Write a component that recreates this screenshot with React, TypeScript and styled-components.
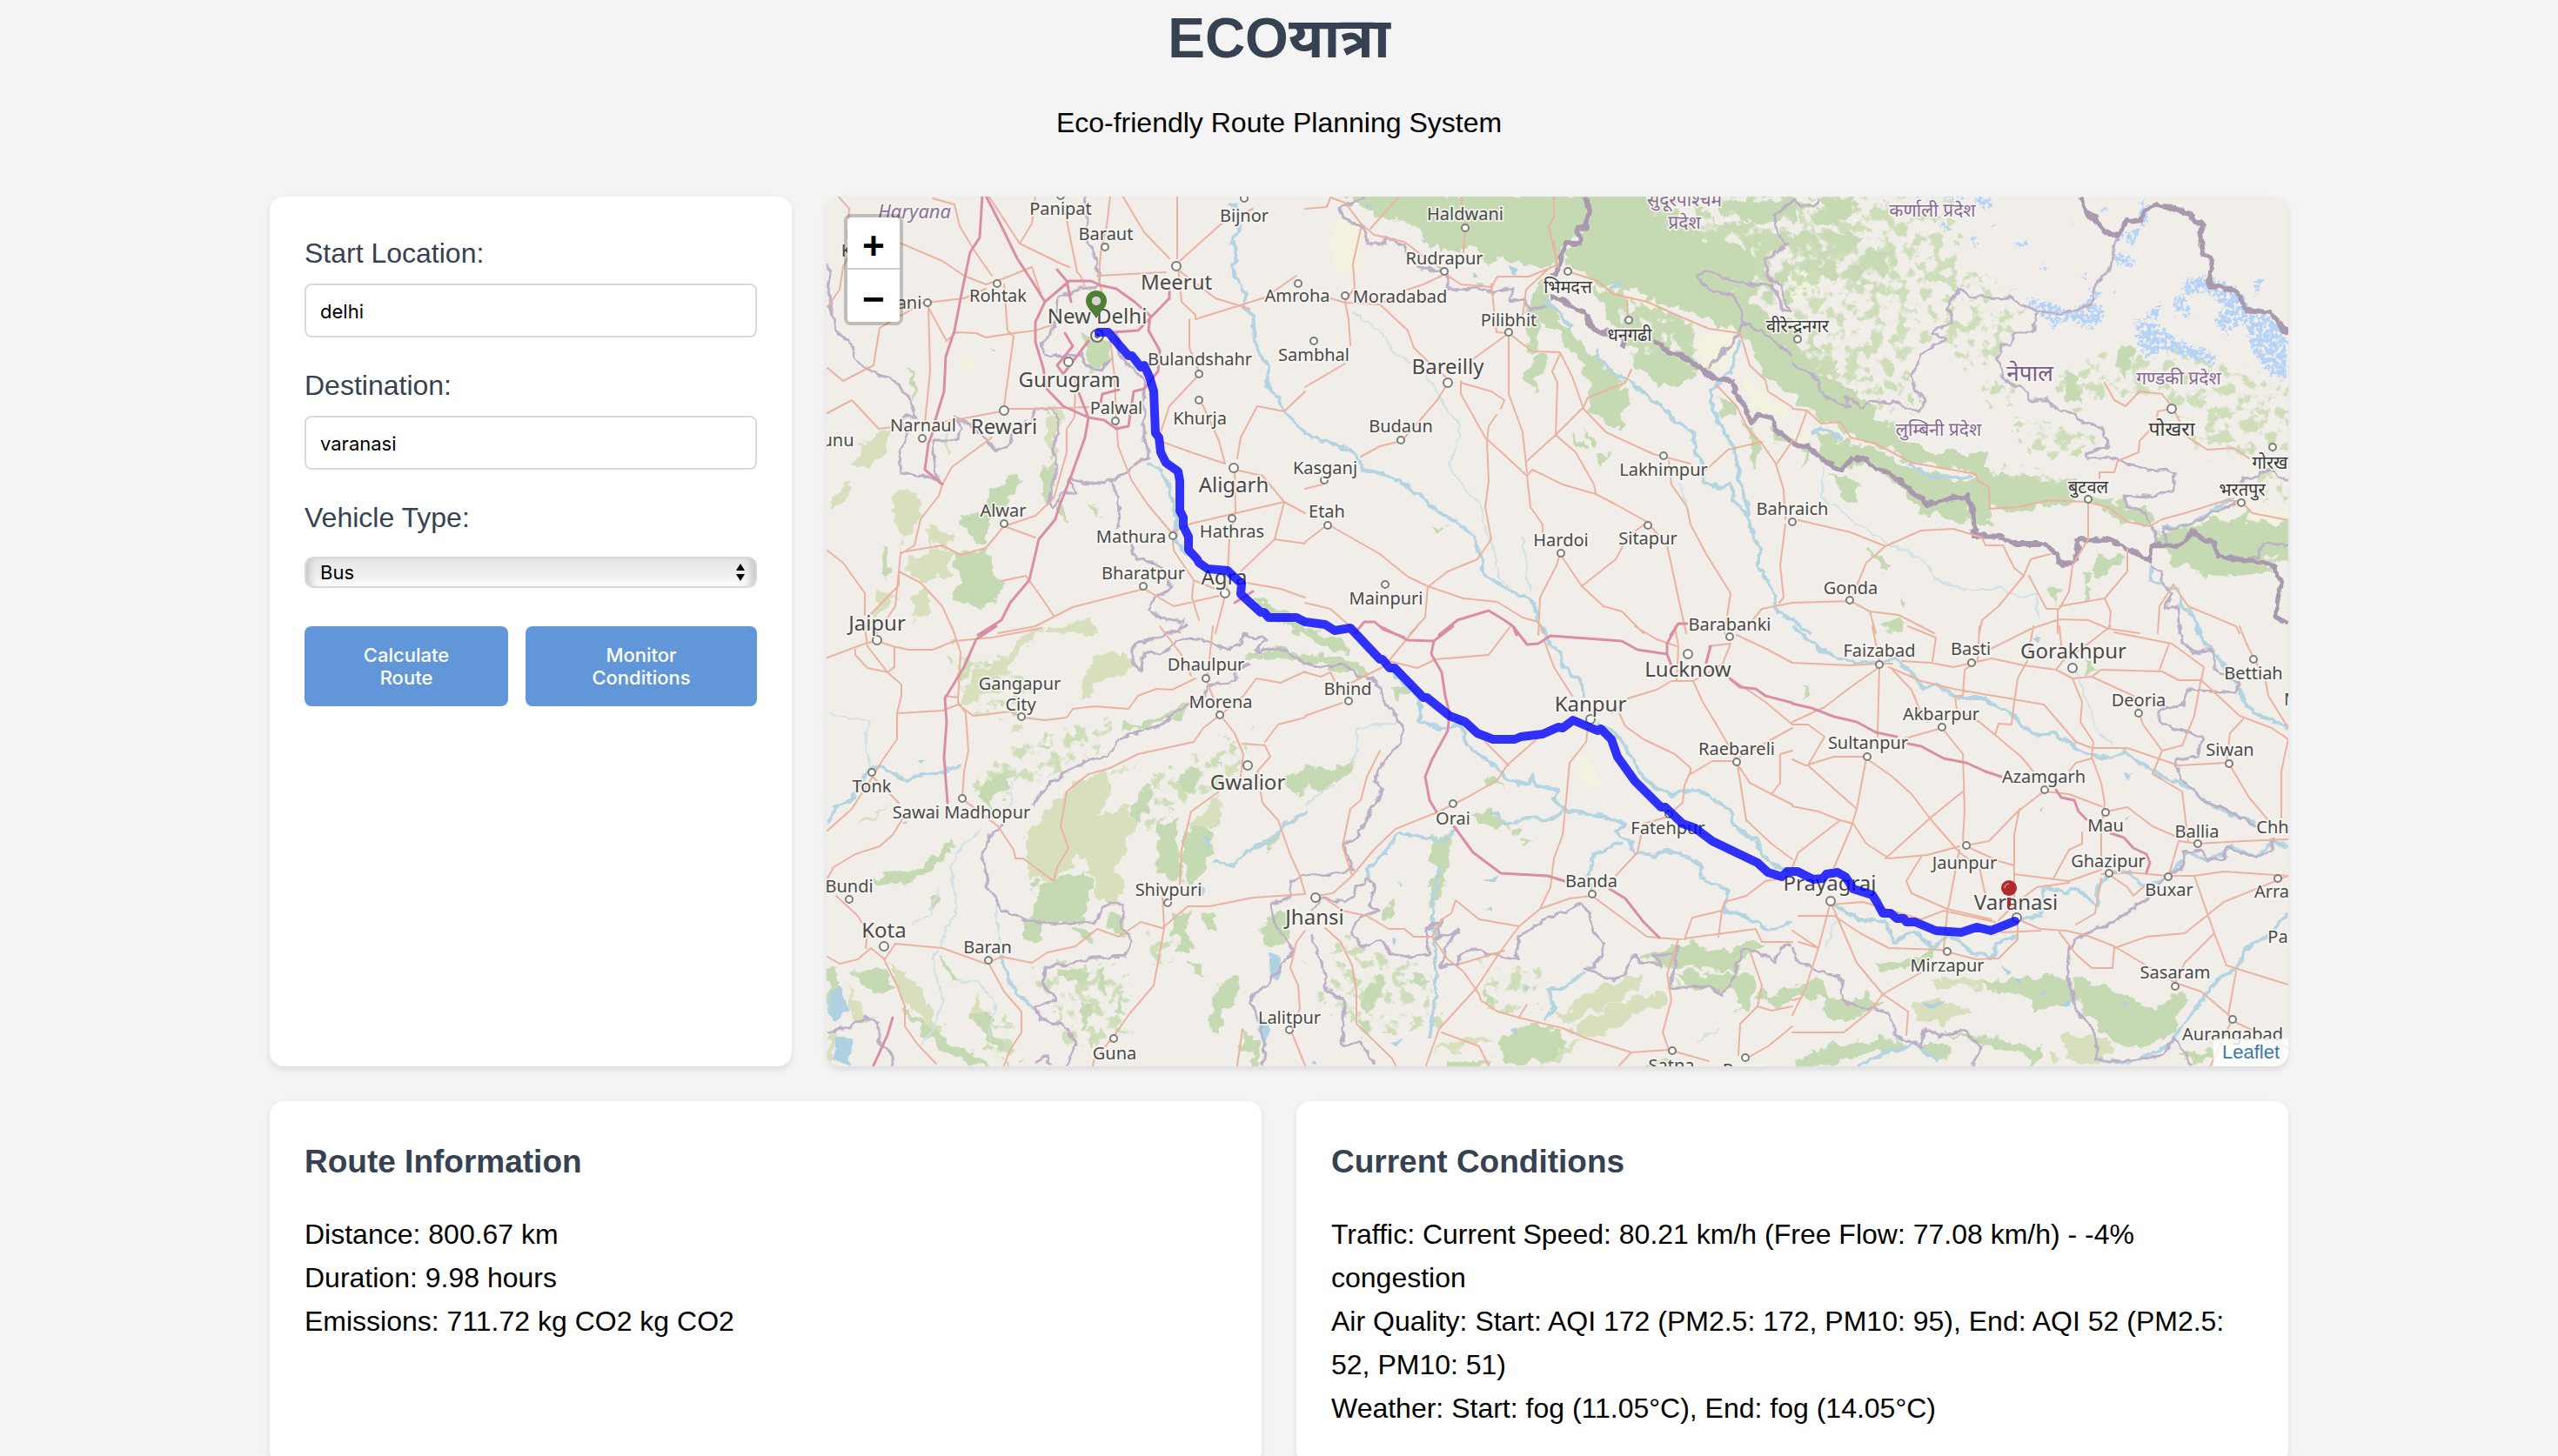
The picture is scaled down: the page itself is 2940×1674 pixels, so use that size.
import React from "react";
import styled, { createGlobalStyle } from "styled-components";

const GlobalStyle = createGlobalStyle`
  * { box-sizing: border-box; }
  body { margin: 0; background: #f4f4f4; }
`;

const sans = `"Liberation Sans", Arial, "Noto Sans", sans-serif`;
const ui = `Inter, "Liberation Sans", sans-serif`;
const ink = "#364152";

const Page = styled.div`
  height: 100vh;
  overflow-y: auto;
  scrollbar-width: none;
  background: #f4f4f4;
  color: #000;
  font-family: ${sans};
  font-size: 32px;
  line-height: 50px;
`;

const Container = styled.div`
  max-width: 2400px;
  margin: 0 auto;
  padding: 0 40px 40px;
`;

const Header = styled.header`
  display: flex;
  flex-direction: column;
  align-items: center;
  gap: 28px;
  margin-bottom: 60px;
`;

const Title = styled.h1`
  margin: 0;
  color: ${ink};
  font-size: 64px;
  line-height: 88px;
  font-weight: 700;
`;

const Subtitle = styled.p`
  margin: 0;
`;

const Planner = styled.main`
  display: grid;
  grid-template-columns: 600px minmax(0, 1fr);
  gap: 40px;
  margin-bottom: 40px;
`;

const Card = styled.section`
  padding: 40px;
  background: #fff;
  border-radius: 16px;
  box-shadow: 0 4px 8px rgba(0, 0, 0, 0.1);
`;

const Form = styled.form`
  display: flex;
  flex-direction: column;
  gap: 30px;
`;

const Field = styled.div<{ $gap?: number }>`
  display: flex;
  flex-direction: column;
  gap: ${(p) => p.$gap ?? 10}px;
`;

const Label = styled.label`
  color: ${ink};
`;

const TextInput = styled.input`
  width: 100%;
  height: 62px;
  padding: 2px 16px 0;
  border: 2px solid #dadada;
  border-radius: 8px;
  background: #fff;
  color: #000;
  font: 400 22px ${ui};
`;

const SelectWrap = styled.div`
  position: relative;
  display: flex;
  margin-bottom: 14px;
`;

const Select = styled.select`
  appearance: none;
  width: 100%;
  height: 36px;
  padding: 0 16px;
  border: 2px solid #d8d8d8;
  border-radius: 10px;
  background: linear-gradient(#e6e6e6, #efefef 60%, #fff);
  box-shadow: inset 10px 0 8px -6px #c4c4c4, inset -10px 0 8px -6px #c4c4c4;
  color: #000;
  font: 400 22px ${ui};
`;

const SelectArrows = styled.svg`
  position: absolute;
  right: 14px;
  top: 8px;
  width: 10px;
  height: 20px;
  pointer-events: none;
`;

const Actions = styled.div`
  display: grid;
  grid-template-columns: 234fr 266fr;
  gap: 20px;
`;

const Button = styled.button`
  padding: 20px 40px;
  border: 0;
  border-radius: 8px;
  background: #6197d9;
  color: #fff;
  font: 500 22px/26px ${ui};
`;

const MapCard = styled.section`
  position: relative;
  height: 1000px;
  overflow: hidden;
  border-radius: 16px;
  background: #f1eee9;
  box-shadow: 0 4px 8px rgba(0, 0, 0, 0.1);
`;

const MapSvg = styled.svg`
  display: block;
  width: 100%;
  height: 100%;
`;

const ZoomControl = styled.div`
  position: absolute;
  left: 20px;
  top: 20px;
  display: flex;
  flex-direction: column;
  border: 4px solid rgba(0, 0, 0, 0.2);
  border-radius: 8px;
  background: #fff;
  background-clip: padding-box;
`;

const ZoomButton = styled.button`
  width: 60px;
  height: 60px;
  padding: 14px 0 0;
  border: 0;
  background: transparent;
  color: #000;
  font: 700 44px/44px "Liberation Mono", monospace;

  &:first-child {
    border-bottom: 2px solid #ccc;
  }
`;

const Attribution = styled.div`
  position: absolute;
  right: 0;
  bottom: 0;
  padding: 0 10px;
  background: rgba(255, 255, 255, 0.8);
  font-size: 22px;
  line-height: 32px;
`;

const AttributionLink = styled.a`
  color: #3b78ab;
  text-decoration: none;
`;

const InfoGrid = styled.div`
  display: grid;
  grid-template-columns: repeat(2, minmax(0, 1fr));
  gap: 40px;
`;

const InfoTitle = styled.h3`
  margin: 0 0 28px;
  color: ${ink};
  font-size: 37px;
  line-height: 60px;
`;

/* ---- map data: every layer is stored per survey sheet ---- */

type Sheet = "A" | "B" | "C" | "D" | "E" | "F";
type Layer = Partial<Record<Sheet, string[]>>;

const sheets: Record<Sheet, { x: number; y: number; k: number }> = {
  A: { x: -10, y: -6, k: 2.8 },
  B: { x: 550, y: -6, k: 2.8 },
  C: { x: 1110, y: -6, k: 2.7034 },
  D: { x: -10, y: 494, k: 2.8 },
  E: { x: 550, y: 494, k: 2.8 },
  F: { x: 1110, y: 494, k: 2.7034 },
};

const at = (s: Sheet, x: number, y: number) => {
  const o = sheets[s];
  return [Math.round(x / o.k + o.x), Math.round(y / 3 + o.y)];
};

const trace = (s: Sheet, pts: string) =>
  "M" +
  pts
    .split(" ")
    .map((p) => {
      const [x, y] = p.split(",").map(Number);
      return at(s, x, y).join(" ");
    })
    .join("L");

const merge = (layer: Layer, close = false) =>
  (Object.keys(layer) as Sheet[])
    .flatMap((s) => layer[s]!.map((l) => trace(s, l) + (close ? "Z" : "")))
    .join("");

const forest: Layer = {
  A: [
    "465,1110 520,1120 560,1040 640,980 655,1000 590,1080 545,1160 540,1210 490,1190",
    "440,1240 540,1250 560,1330 600,1370 520,1440 440,1400 460,1320",
    "725,950 752,950 752,1070 730,1060",
    "770,1060 795,1130 780,1110", "880,1075 910,1090 905,1115",
    "860,500 930,520 935,600 880,610 860,560",
    "205,1230 225,1260 225,1330 205,1310",
    "1400,1410 1480,1440 1568,1500 1568,1525 1470,1480",
    "300,610 315,680 305,720",
  ],
  B: [
    "140,15 480,15 800,15 895,15 900,120 835,180 810,250 740,250 600,235 520,190 430,200 360,120 250,80",
    "905,15 1120,15 1100,90 1300,170 1430,200 1450,300 1380,340 1280,300 1480,420 1560,560 1568,700 1480,640 1420,500 1280,430 1150,380 1050,330 950,320 850,260 840,210 905,140",
    "1340,60 1568,30 1568,90 1480,100",
    "770,290 780,380 830,470 900,530 960,600 1040,690 1040,740 980,800 920,760 910,640 870,560 800,480 750,440 745,540 725,540 715,420",
    "750,560 775,580 740,680 715,620", "940,340 1000,380 1035,470 1000,470 950,400", "1060,380 1090,480 1070,500",
    "1130,400 1180,500 1170,530", "1180,430 1240,480 1240,580 1200,540", "1050,560 1200,570 1260,620 1200,670 1110,650",
    "1340,720 1380,730 1375,780 1340,775", "1420,800 1470,880 1445,940", "1500,810 1560,860 1520,850",
    "870,840 890,880 880,885", "905,820 935,870 925,880", "410,1160 445,1165 430,1175", "990,770 1030,800 1010,820", "950,910 975,915 955,940",
  ],
  C: [
    "0,540 80,620 200,700 260,780 350,860 450,900 600,905 610,970 800,1010 900,1010 870,1070 740,1090 620,1090 560,970 380,930 260,870 160,840 60,740 0,700",
    "80,820 150,870 260,890 370,960 500,990 600,1000 610,1140 570,1150 540,1060 430,1080 360,1030 270,960 190,920 160,960 100,920",
    "340,1010 430,1075 545,1060 550,1130 460,1120 400,1110", "120,980 205,1020 200,1080 160,1050", "20,880 45,890 40,930",
    "930,1050 1100,1100 1110,1150 1020,1140", "1140,1180 1300,1150 1541,1150 1541,1220 1450,1260 1490,1310 1300,1330 1180,1270 1140,1240",
    "1020,540 1060,550 1040,630 1010,600", "950,1250 1020,1270 960,1330 930,1290", "900,1310 930,1320 900,1350", "905,1360 930,1370 915,1410",
    "285,1490 350,1480 350,1510 310,1525", "810,1370 835,1380 810,1420", "240,1240 300,1290 290,1310", "340,1410 350,1415 345,1430",
    "100,30 180,20 160,100 110,90", "850,630 890,650 880,730 850,700", "1410,1090 1410,1140 1370,1145",
  ],
  D: [
    "700,890 780,870 860,850 880,900 850,1010 760,1030 680,1010 720,950",
    "1100,680 1160,670 1165,880 1110,860 1090,800", "1200,690 1270,700 1260,770 1220,860 1190,900 1180,780",
    "1170,500 1230,480 1220,580 1180,580", "1010,620 1060,560 1060,640 1020,670",
    "520,580 580,510 605,530 560,620", "170,880 330,830 430,750 410,790 320,870 190,900",
    "500,1340 540,1350 600,1460 570,1450", "650,1020 720,1020 710,1080 680,1080", "400,1150 450,1225 430,1220",
    "1140,980 1190,990 1180,1060 1220,1110 1160,1120", "1240,990 1270,990 1270,1040 1245,1030", "1200,1150 1240,1200 1210,1190",
    "1440,1040 1500,980 1510,1090 1440,1095", "1380,110 1470,70 1568,110 1568,125 1470,95 1400,120", "980,350 1100,320 1190,270 1180,300 1090,340",
    "120,1190 200,1180 240,1250 190,1260", "280,1330 420,1430 500,1480 560,1515 480,1505 380,1450", "1290,1230 1340,1210 1340,1290 1300,1330 1290,1400 1260,1370",
    "1370,1400 1410,1440 1410,1515 1380,1460", "930,1010 980,1010 980,1060 940,1040", "820,1040 880,1050 870,1090", "30,1190 60,1200 50,1290 30,1290",
    "780,1190 870,1200 840,1240", "900,1170 930,1230 920,1270", "970,1290 990,1330 970,1330", "850,1300 880,1310 860,1390", "1500,520 1568,500 1568,560 1510,555", "725,410 750,415 740,430",
    "1440,740 1480,735 1450,770", "370,930 380,940 360,980",
  ],
  E: [
    "0,490 60,500 160,470 140,500 70,560 20,570 0,540", "0,90 60,110 160,130 210,180 120,140 0,130", "0,20 60,20 150,90 90,80",
    "540,640 600,635 640,700 560,680", "590,515 640,540 600,540", "410,730 460,720 460,820 430,930 410,970 420,850",
    "670,690 705,695 680,715", "1100,1140 1260,1090 1300,1130 1470,1090 1380,1180 1250,1180 1160,1180",
    "1200,1210 1430,1190 1450,1230 1410,1330 1380,1260 1260,1240", "1470,1280 1568,1245 1568,1290 1500,1305",
    "630,1430 750,1370 820,1400 820,1470 720,1515 640,1490", "185,1320 205,1230 255,1210 225,1300 195,1330", "340,1215 400,1220 370,1240", "180,1360 200,1385 180,1385",
    "520,1490 600,1500 590,1515 450,1515", "690,740 705,755 695,755", "575,1250 590,1290 580,1290", "280,210 350,220 300,240", "300,940 270,1010 250,1000",
    "1090,1515 1160,1490 1160,1515",
  ],
  F: [
    "590,1240 740,1210 850,1215 870,1290 760,1330 720,1270 640,1260", "870,1215 960,1240 1080,1310 1160,1310 1200,1260 1220,1280 1180,1400 1100,1450 980,1420 920,1340 880,1280",
    "270,1165 340,1160 440,1115 410,1160 280,1185", "0,1240 90,1220 110,1300 180,1300 230,1270 280,1290 230,1330 120,1350 90,1280 0,1270",
    "10,1490 150,1440 320,1420 350,1450 200,1480 90,1515 10,1515", "400,1450 470,1440 480,1490 420,1480", "480,1410 620,1420 700,1440 770,1460 740,1515 720,1470 600,1440",
    "285,0 350,0 320,25", "910,120 930,150 915,165", "1220,1470 1300,1480 1260,1515", "35,215 45,230 38,240",
  ],
};

const scrub: Layer = {
  A: [
    "130,880 240,820 220,900 160,950 120,940", "240,1050 320,1030 330,1130 270,1220 240,1100", "40,1060 110,1000 90,1060 40,1100",
    "340,1160 430,1180 420,1230 360,1220", "280,1260 430,1230 430,1330 300,1340", "180,1390 260,1380 230,1440 190,1460",
    "300,1390 360,1370 350,1460 310,1480", "735,760 780,760 760,900 735,940", "400,880 440,830 410,900", "740,1500 860,1470 900,1520 740,1525",
  ],
  D: [
    "460,270 500,150 560,140 700,10 740,0 600,150 510,260", "840,200 900,100 990,80 1030,140 930,190 850,240", "950,510 1050,455 980,490 950,500",
    "660,730 780,590 820,550 930,490 950,560 910,650 1000,620 1020,680 970,830 980,950 940,960 900,930 860,780 800,830 760,880 680,870",
    "1200,680 1290,580 1305,660 1270,680 1210,700", "1310,480 1350,480 1350,510 1310,515",
    "220,1150 300,1220 400,1380 390,1415 330,1350 260,1260", "100,1240 150,1340 200,1350 120,1370", "30,1400 55,1420 50,1515 30,1490", "500,1270 525,1290 520,1380 500,1350",
    "480,230 510,190 520,210", "620,355 665,340 650,370", "120,680 240,620 150,680",
  ],
  E: [
    "800,1350 920,1260 1080,1195 1090,1240 960,1310 830,1370", "850,1390 1000,1290 1150,1260 1160,1290 1010,1380 920,1420", "720,1515 740,1470 900,1430 820,1490",
    "1180,1220 1240,1240 1180,1250", "410,1470 520,1420 600,1420 500,1460", "0,1140 15,1150 10,1180",
  ],
  F: [
    "370,1300 400,1290 500,1300 560,1330 480,1340 480,1390 400,1350 380,1350", "430,1210 600,1225 580,1255 450,1240", "840,1420 930,1400 1000,1450 940,1515 850,1480", "800,1475 840,1480 820,1510",
  ],
};

const meadow: Layer = {
  A: ["480,580 510,600 490,625", "975,190 995,195 980,210"],
  B: [
    "90,110 180,90 180,280 110,290 75,210", "850,400 950,470 950,490 870,460", "1260,480 1400,490 1350,620 1280,600", "1400,640 1560,760 1540,780 1430,740", "1060,330 1150,400 1100,420",
  ],
  C: ["250,790 400,860 490,890 350,880 240,830", "0,270 60,300 30,390 0,380", "1430,1090 1541,1110 1541,1140 1430,1130", "0,820 60,850 50,880 0,860", "1200,1150 1350,1100 1360,1140"],
  D: ["520,520 570,490 540,550"],
  E: ["870,455 915,460 950,530 930,570 880,510"],
  F: ["325,1050 350,1060 335,1080", "1010,560 1060,555 1030,575", "1420,830 1435,830 1425,850"],
};

const denseWood: Layer = {
  B: ["900,15 1250,15 1340,110 1568,100 1568,560 1470,430 1200,330 950,300 840,230", "1280,15 1568,15 1568,100 1400,100", "960,330 1250,470 1260,640 1110,600 1000,480"],
  C: ["60,18 200,18 180,100 80,110", "0,140 180,150 330,230 240,330 60,270 0,280", "0,430 60,520 140,620 60,640 0,560", "1180,1150 1541,1140 1541,1280 1300,1320"],
};

const woodland: Layer = {
  C: [
    "0,18 500,18 520,250 700,350 440,360 500,430 380,560 380,740 250,770 0,560",
    "500,400 700,400 650,600 500,600 470,480", "600,640 700,700 680,760 610,740", "1000,560 1200,560 1541,660 1541,900 1250,880 1200,740 1050,700 900,740 820,700 830,600",
    "700,780 900,800 960,880 800,920 700,880", "1450,940 1541,940 1541,1090 1450,1070", "620,960 820,980 820,1040 640,1060",
  ],
  D: ["400,60 700,200 640,320 480,300", "480,560 640,420 860,340 1000,330 900,440 700,540 540,600", "1080,500 1240,460 1400,350 1360,500 1180,620 1060,720", "700,1180 980,1160 1000,1420 800,1460 760,1300", "540,1320 640,1400 640,1510 560,1500", "1060,1060 1170,1080 1100,1200"],
  E: ["100,1080 400,1180 440,1380 200,1420 60,1300", "560,1180 760,1180 740,1340 620,1300"],
};

const glaciers: Layer = {
  C: [
    "1210,310 1290,290 1400,350 1430,420 1350,490 1310,460 1340,390 1280,340 1220,360",
    "1070,450 1130,460 1200,510 1320,570 1310,600 1220,570 1150,540 1100,580 1070,520", "1400,420 1500,430 1541,520 1541,650 1490,630 1430,560",
    "720,370 800,385 860,410 930,370 975,420 930,470 850,440 810,470 760,410", "1180,370 1210,350 1240,440 1190,420",
    "1000,200 1060,240 1060,265 1000,240", "1020,150 1080,130 1060,190", "450,100 490,120 480,140", "560,20 620,20 610,70", "560,150 580,190 550,180",
    "770,250 795,260 780,285", "905,285 915,300 900,300", "680,180 730,170 720,195", "960,50 980,60 965,70", "1085,30 1105,60 1100,120 1080,100", "460,20 530,20 520,40",
    "1435,300 1460,310 1440,360", "1050,450 1100,430 1150,380 1130,440", "620,110 635,120 625,130", "865,100 880,105 870,115", "1000,340 1010,345 1002,350", "930,330 960,360 930,380",
  ],
};

const lakes: Layer = {
  D: ["45,1260 70,1240 100,1330 60,1365 30,1330", "60,1420 110,1420 100,1510 50,1500", "1450,1130 1490,1140 1485,1220 1460,1210", "1410,1340 1460,1390 1440,1470 1420,1400", "265,680 295,675 290,685", "680,905 690,900 690,915", "1240,730 1262,740 1255,770", "1285,470 1305,470 1300,485", "1230,880 1245,900 1235,940", "325,465 345,465 335,480"],
  E: ["575,880 615,855 610,880", "300,880 320,890 310,900", "575,975 600,975 600,990", "275,1070 295,1080 280,1100", "120,1160 130,1165 125,1180", "270,1430 310,1425 290,1450", "665,1390 685,1390 675,1410", "700,1240 725,1240 715,1250", "20,1500 40,1500 40,1515", "575,1130 600,1130 580,1145"],
  F: ["740,35 770,45 765,60", "650,1180 680,1185 665,1205", "400,1300 480,1295 430,1320", "690,1210 710,1220 705,1240", "760,1270 790,1255 780,1275", "830,1305 870,1290 860,1310", "1020,1300 1045,1305 1030,1315", "1035,505 1055,510 1040,525", "770,625 785,625 775,640", "1035,660 1055,655 1040,672"],
  B: ["375,165 400,170 385,180", "655,265 690,270 680,290 660,285", "540,280 560,290 545,300", "190,45 220,50 195,65", "550,315 575,320 560,330"],
  A: ["1320,35 1350,45 1330,50", "555,540 570,545 565,553"],
};

const rivers: Layer = {
  A: [
    "1335,45 1360,110 1335,170 1350,230 1330,260 1360,330 1380,360 1370,400 1400,430 1410,550 1450,600 1445,670 1480,710 1500,750 1568,840",
    "1060,940 1100,960 1130,1030 1150,1100 1150,1200 1190,1260",
  ],
  B: [
    "0,835 60,860 150,895 190,960 250,975 320,1010 380,1060 430,1110 480,1130 540,1190 570,1270 575,1320 640,1365 700,1400 740,1420 745,1480 770,1525",
    "770,370 830,430 860,470", "935,545 940,575 1000,630 1040,645 1080,690 1150,745 1190,795 1250,830 1260,900 1270,940 1285,1000 1330,1020 1370,1010 1380,1060 1420,1120",
    "1400,510 1370,620 1310,680 1310,750 1350,830 1385,890 1395,990 1420,1080 1430,1150 1460,1230 1460,1290 1500,1360 1520,1450 1568,1480", "980,340 1020,310",
  ],
  C: ["60,830 90,820 160,855", "360,935 420,980 560,990", "1370,1060 1300,1100 1240,1150 1150,1160", "1110,1290 1115,1340 1200,1380 1210,1430 1250,1460 1260,1525", "0,1470 30,1510 60,1525"],
  D: ["30,680 60,620 110,590 160,500 200,480 280,530 340,510 400,500 460,480", "590,1130 610,1210 640,1270 700,1320", "1268,810 1340,825 1380,780 1450,740 1500,690 1568,640"],
  E: [
    "760,0 790,60 820,90 830,140 890,190 900,240", "940,330 1000,370 1040,430 1080,510 1130,560 1180,580 1270,565 1320,600 1370,640 1380,690 1450,740 1470,790 1520,830 1568,840",
    "270,150 370,250 370,330 440,355 500,340 520,410 570,450 620,490 650,530 720,545 730,510 740,550 810,565 800,600 840,640 950,655 1030,680 1000,710 1050,750 1060,780 1120,790 1180,775 1240,800 1280,830 1270,870 1360,910 1350,980 1420,1000 1470,1040 1520,1045 1568,1020",
    "490,700 440,740 380,730 300,710 260,780 200,840 210,880", "430,830 410,970 420,1100 420,1280 400,1420", "600,640 650,680 720,660 790,670 830,640",
    "930,930 910,870 930,790 1020,745", "900,1190 830,1250 780,1250 800,1310 770,1360",
  ],
  F: [
    "0,0 40,40 100,90 170,120 270,130 320,110 370,160 400,210 450,200 520,250 600,250 690,310 740,375 810,370 880,420 930,440 990,460 1030,430 1090,480 1150,520 1220,550 1280,600 1340,640 1440,680",
    "1260,10 1290,70 1310,90 1370,180 1400,250 1430,300 1480,320 1541,350",
    "130,960 200,1010 290,1020 320,1090 380,1050 440,1110 490,1060 560,1130 620,1140 650,1080 700,1070", "700,1010 770,1000 780,900 850,920 880,900 950,970 950,900 990,850 1050,850 1090,900",
    "1090,900 1170,860 1230,780 1290,810 1370,760 1440,800 1490,740 1541,760", "1541,990 1480,1070 1420,1100 1380,1180 1320,1220 1260,1310 1210,1380 1180,1440 1050,1505 960,1490",
    "200,1515 280,1480 380,1440 450,1500",
  ],
};

const streams: Layer = {
  B: ["150,410 240,480 290,560 370,610 420,680 460,760 500,810 490,890 460,940 510,1020 560,1080 590,1190 620,1260 620,1330 670,1370", "700,1190 710,1290 725,1380", "1210,1010 1230,1080"],
  C: ["100,950 90,1050 180,1130 250,1180 300,1220 400,1260 450,1340 540,1370 640,1370 720,1400 760,1390 760,1480"],
  D: ["40,300 160,330 150,400 170,490", "530,700 460,760 430,830 430,890 450,960 400,1080 370,1150 400,1280 380,1380 330,1440", "570,960 580,1060 600,1130", "450,1220 520,1230 570,1300 550,1430", "390,900 360,990 300,1030", "630,540 620,620"],
  E: ["160,480 170,350 260,340 310,330", "0,620 90,540", "1330,1390 1260,1430"],
  F: ["880,160 920,260 950,370 1000,410", "100,1110 130,1030 150,970"],
};

const motorways: Layer = {
  A: [
    "530,15 520,160 490,210 465,340 440,480 412,570 405,690 378,790 368,840 355,870 345,960 400,1012",
    "540,15 590,120 640,230 690,310 730,380 700,450 700,520 725,610 735,680 790,740 870,780 920,790 960,820 1000,810 1015,690 1050,680 1095,620 1100,550 1065,480 1070,430 1020,380 960,335 910,325 880,310 810,308 730,380",
    "870,780 860,850 810,1000 775,1090 765,1130 710,1200 680,1340 620,1420 590,1480 515,1530", "770,270 800,310 815,380", "870,515 790,630 770,600 820,535 795,490",
    "950,487 1030,480 1130,370 1130,330", "840,695 870,780", "970,685 915,700 910,730", "1340,1420 1400,1380",
  ],
  B: ["160,1525 190,1485 225,1485 250,1510 320,1540", "430,1530 490,1480 590,1447 640,1480 670,1500 680,1530", "1175,1530 1200,1492 1230,1492"],
  D: ["575,0 510,45 470,140 410,250 415,330 405,450 417,610", "240,1350 225,1410 180,1515"],
  E: ["240,0 330,48 415,50 475,0", "415,50 405,95 440,160 450,240 465,300 460,360 410,460 385,520 400,600 425,645", "480,690 540,780 630,852 780,860 835,880", "980,905 1030,940 1090,1020 1140,1075", "668,0 715,62 750,60 790,33 1020,52 1070,82 1165,95 1180,135", "1195,0 1165,60 1165,95", "1305,70 1290,125", "1365,180 1400,210 1450,215 1480,240 1568,265"],
  F: ["0,268 60,282 130,312 200,330 260,365 325,380", "360,405 400,415 470,455 540,470 600,500 650,518", "820,565 835,590 875,600 890,640 915,665", "990,715 1030,730 1060,765 1100,785 1110,815 1100,848"],
};

const trunks: Layer = {
  A: [
    "65,15 100,60 95,160 110,200 80,260 70,340 30,400", "370,25 440,45 455,120 500,200 560,290", "800,100 835,280 845,290 860,330", "940,15 930,120 910,210 905,300 925,400",
    "980,15 1050,140 1130,230", "1155,15 1155,230", "900,290 1120,280", "1160,260 1170,380 1215,425 1215,440 1440,365 1540,290", "1150,265 1280,370 1390,405", "1165,240 1300,110 1400,60",
    "270,180 400,240 470,290 540,320 600,300 690,260 720,360", "350,385 470,370 540,335", "550,15 650,180 780,250 810,262", "340,385 200,470 180,600 80,655 30,610", "350,390 415,515 445,485 510,490 540,505 630,490 700,480 760,460",
    "600,320 610,480 630,500 600,740", "600,750 700,750 870,745", "590,760 440,790 195,820 110,720 30,765", "560,850 430,950 400,1010 390,1050 330,1130 310,1220 265,1250 260,1310 260,1360 160,1470 155,1525",
    "355,400 360,620 345,800", "30,1240 80,1280 150,1385 150,1460", "265,1245 400,1220 460,1255 540,1230 600,1155 700,1195", "600,1155 700,1120 760,1060 800,900 800,820 825,780 830,640",
    "940,510 955,640 960,790 965,880 1010,1000 1060,1080 1140,1180 1145,1240 1210,1340 1300,1380", "1100,860 1200,900 1310,940", "1230,720 1240,740 1290,860 1310,940",
    "1340,960 1345,1100 1325,1200 1315,1370 1280,1525", "1340,960 1430,980 1500,1070 1568,1110", "1500,1070 1200,1145 1140,1175", "1500,1070 1470,1200 1360,1310", "1470,1200 1568,1215",
    "1350,920 1360,850 1415,740 1500,760 1568,690", "1220,640 1130,740 1100,840", "1195,440 1195,540 1225,620", "1050,1370 820,1435 700,1500 580,1525", "1050,1370 1145,1430 1290,1395", "1380,1350 1490,1370 1568,1400",
    "260,1310 330,1350 400,1430 440,1525", "260,1310 250,1430 190,1525", "700,15 690,110 650,180", "590,1345 670,1325 720,1400 760,1465", "1210,1340 1205,1400 1225,1480",
  ],
  B: [
    "0,60 70,55 80,20 130,40 180,110 220,150 320,175 400,240 450,275", "210,130 300,20", "500,15 515,125 510,210", "180,130 155,250 160,330 128,380 140,440 145,530", "80,370 130,385 240,390 310,345 380,320 450,285 500,320 600,330 620,295 720,295 810,255 800,170",
    "800,15 800,90 785,120 800,200 815,260", "240,390 330,480 350,540 410,600 450,640", "600,320 615,485 655,490 540,580", "655,490 655,700 700,830 715,970", "655,490 730,552 820,555 860,640 895,750 970,830 1120,905 1240,940",
    "820,560 795,620 812,660 805,840 715,930", "895,745 805,840", "895,745 910,710 1030,660 1050,615", "805,840 870,900 930,1010 935,1045", "500,655 500,700 580,850 640,910 715,980 730,960 830,1010 935,1045 1000,1080 1100,1140 1165,1220 1200,1400 1225,1525",
    "500,660 600,690 640,720 630,750", "455,665 425,720 370,790 310,860 240,880 180,915", "715,980 725,1090 765,1150 765,1180", "585,860 590,1000 580,1090 600,1200 555,1270 460,1310 395,1365", "585,860 590,810 615,770",
    "85,1155 240,1250 330,1330 395,1362 510,1405 620,1415 700,1470 750,1485 770,1525", "395,1362 385,1470 340,1525", "0,1210 60,1160", "0,1420 80,1440 170,1525", "750,1530 755,1400 810,1290 820,1250 890,1362 960,1430 1020,1450 1090,1525",
    "890,1362 1000,1270 1040,1190 1095,1145", "1170,930 1180,1010 1230,1090 1240,1150 1290,1250 1370,1385 1350,1525", "0,1025 55,1010", "845,275 940,310 990,355 1100,380 1200,430 1300,475 1400,490 1430,600 1480,650 1490,690 1568,745",
    "1035,375 1040,440", "1325,670 1390,740 1430,830 1470,870 1515,940 1540,1030 1545,1130", "1290,960 1360,890 1470,865", "1515,945 1568,860", "1430,1490 1470,1440 1568,1420", "1545,1150 1530,1290 1540,1400 1525,1420", "600,335 610,310", "700,430 710,340 790,260", "0,675 130,595",
  ],
  C: [
    "0,750 45,755 90,800 150,795 180,850 260,870 370,935 570,975 575,1000 610,1020 615,1095 700,1090 800,1065 915,1070", "45,755 10,860", "915,1070 980,1090 1040,1140 1110,1155 1150,1130 1220,1110 1350,1065 1395,1070 1430,1110 1541,1135",
    "920,1075 920,1200 870,1290 860,1380 830,1440", "1180,750 1135,760 1130,800 1080,860 1075,900 1010,930 1000,970 955,970 955,990", "970,660 1000,720 1035,740 1080,690 1150,700 1180,740 1230,850 1290,890 1370,885 1420,920",
    "20,1135 180,1175 290,1225 400,1170 500,1165 590,1195 600,1220 655,1220 690,1300 720,1325", "290,1225 230,1280 190,1390", "0,1420 180,1412", "180,1412 240,1450 260,1525", "240,1450 330,1460 440,1525",
    "720,1325 640,1430 590,1480 580,1525", "720,1325 740,1270 800,1250", "735,1325 790,1440 825,1440 825,1525", "830,1430 970,1405 1040,1310 1040,1230", "830,1475 920,1480 985,1510 1080,1525", "970,1405 990,1450 985,1510",
    "1185,1355 1140,1430 1135,1525", "1185,1355 1230,1430 1380,1500 1390,1525", "830,1475 740,1510",
  ],
  D: [
    "30,108 150,60 190,50 240,70 290,80 370,80 440,50 560,40 720,5", "120,80 120,100 160,145 225,160 245,140 245,70", "150,0 160,70 225,160 270,200 270,240 255,300 255,390 210,460 175,520 110,630 30,705",
    "260,300 400,290 450,270 500,310 620,295 660,315 730,325 800,315 820,285 890,275 1000,285 1030,240 1090,215 1140,220 1215,180", "430,0 460,90 450,260 475,300 485,430 470,500 465,590",
    "410,240 450,245", "175,520 260,610", "280,650 240,720 200,760 120,785 50,830 30,870", "470,600 580,690 630,770 635,800 660,800 760,880 770,830 805,765 780,690 800,570 870,510 940,490 1030,440 1210,400 1240,350 1290,310",
    "1250,180 1290,300 1340,370 1370,440 1360,520", "1270,0 1255,170", "1100,0 1170,100 1200,170", "1365,405 1440,410 1455,450 1415,500 1430,610 1480,670 1520,790 1550,860 1568,920", "1290,570 1200,640 1170,770 1165,890",
    "1440,400 1480,340 1568,315", "1295,305 1370,240 1410,180 1490,195 1568,155", "60,930 130,1000 160,1060 155,1110", "30,1140 70,1165 130,1150 170,1110 215,1150 250,1095 400,1110 540,1165 590,1140 690,1160 740,1125 830,1105 900,1045 970,1070 1040,1020 1110,1040 1190,965 1260,965 1400,935 1568,925",
    "212,1150 255,1240 280,1310 280,1380 320,1440 380,1510", "550,1160 600,1260 655,1330 655,1400 620,1460 600,1515", "1110,930 1115,1040 1080,1240 1000,1340 950,1420 890,1490 885,1515", "1568,1050 1540,1090 1520,1180 1545,1240 1550,1320 1520,1390 1568,1515", "1365,1390 1350,1515",
  ],
  E: [
    "0,310 120,265", "0,160 50,175 80,160 110,215 250,140 270,120 360,0", "270,120 360,145 420,115 590,98 660,0", "240,430 200,520 180,600 145,630 120,760 150,860", "745,390 650,480 620,530 520,590 430,640 290,700 220,770 150,860 90,920 35,930",
    "910,350 905,400 850,470 840,600 830,720 800,800 790,900 755,975", "580,400 655,480", "770,50 800,140 860,240", "985,300 1040,250 1130,220 1180,190 1250,190", "1010,300 1030,345 1090,390 1190,440 1240,490 1240,510 1310,465 1390,465",
    "1190,0 1200,70 1195,190", "1250,190 1280,260 1320,330 1390,460 1420,670 1500,750 1568,805", "1300,70 1365,60", "1370,60 1345,130 1300,160 1250,190", "1390,30 1490,80 1568,125", "1060,0 1130,45 1195,70", "1370,180 1480,260 1568,340",
    "1240,500 1220,550 1215,610 1160,660 1090,680 1070,780 1000,860", "1390,470 1430,540 1500,580 1568,615", "1500,580 1530,540 1530,440 1568,430", "1400,450 1568,350",
    "925,930 850,940 755,975 690,1035 630,1120 550,1250 430,1390 390,1515", "925,930 1010,1000 1100,1070 1200,1080 1450,1045 1470,1090 1568,1090", "1220,1080 1245,1005 1340,980 1330,1070", "1340,980 1350,950 1420,930 1480,880 1530,870",
    "65,940 120,980 200,1000 270,1045 320,1045 350,1070 410,1070 460,1150 510,1190 560,1270 565,1290 620,1330 690,1350 830,1385 900,1420 1050,1470 1170,1460 1300,1500", "410,1070 440,1010 470,990 485,945 560,1010 690,1035",
    "65,1040 115,1090 150,1170 165,1260 165,1370 280,1490 290,1515", "690,1348 715,1305", "440,1400 560,1450 590,1515", "1200,1080 1165,1200 1180,1290 1150,1400 1170,1460", "1430,1120 1470,1240 1455,1310 1400,1370 1395,1480", "1420,1490 1490,1450 1568,1380", "1455,1310 1500,1325 1568,1310", "1050,1470 1010,1515", "500,1165 640,1120",
  ],
  F: [
    "0,125 180,135 270,130 310,130", "270,140 265,370 265,380", "270,140 180,210 100,280 0,330", "250,0 270,120", "340,120 430,125 500,140 560,125 620,110 720,135 820,150 870,180 930,175 960,150 1150,155 1200,185 1270,185 1390,310 1490,350 1541,390",
    "360,0 445,40 435,120", "580,0 575,120 535,150 530,240 505,240 510,290 580,330 630,375 710,450 750,500", "750,0 730,120 700,180 690,260 680,340 640,335 630,375", "610,80 740,10", "990,0 920,60 840,120 820,150", "830,0 840,120",
    "870,180 900,260 895,330 935,400 930,450 960,540 970,610 960,700 960,830", "930,175 1060,240 1090,340 1150,430 1120,510 1210,570 1230,740", "1150,430 1210,410 1250,310 1270,180", "1270,190 1280,140 1180,60 1000,20", "1170,60 1140,150",
    "310,150 370,220 400,300 420,330", "300,140 400,190 500,215 780,270 880,400 930,420 1040,420 1200,480 1350,470 1360,370 1400,320", "1360,480 1420,590 1480,670", "1390,0 1410,60 1470,190 1480,240 1541,350", "1541,390 1520,500 1520,660",
    "230,455 200,630 180,700 130,830", "230,455 310,520 370,580 430,665 520,780 580,830 600,930", "230,450 130,450 40,480 0,460", "0,340 50,340 100,380 50,480 130,560 200,630", "0,620 80,640 150,670 190,680 230,750 300,800 420,790 520,760", "150,670 20,780 0,830",
    "465,350 530,440 535,640 530,740", "465,350 340,390", "530,570 430,660 290,800", "540,755 610,740 700,640 780,570", "705,630 690,720 690,960", "785,570 860,580 960,620", "860,500 880,470 930,455", "975,640 1040,625 1120,690 1200,730", "960,840 860,880 690,855",
    "540,760 640,810 690,825", "0,1340 40,1250 80,1110 120,950 200,1160 280,1270 360,1330 355,1410", "120,960 220,950 400,1010 470,980 630,1020", "520,770 480,990 470,1110", "400,795 355,880 370,920 480,975 620,1010", "20,1000 130,1000 210,1060 300,1110 460,1115 570,1150 640,1145 700,1080 700,1020",
    "700,1010 770,1045 850,1050 910,1065 1000,1105 1190,1230 1270,1260 1365,1350", "650,1055 770,1050", "830,1055 880,1130 930,1180 995,1180 1000,1110 1100,1070 1220,1060 1340,950 1541,860", "1250,860 1310,1060 1350,1170 1541,1235", "1541,860 1340,845 1250,860 1165,860 1050,850 960,855", "1170,855 1200,740 1260,750 1400,740 1541,735",
    "640,1015 700,950 760,900 860,885", "990,860 1040,900 1060,930 1090,900", "1310,1060 1220,1160 1190,1230", "1380,1190 1355,1340", "960,870 940,990 880,1030", "900,710 900,750 860,770 810,870", "0,1290 30,1280", "280,1270 400,1195", "0,1400 160,1400 240,1330 280,1270", "1365,1360 1541,1455", "1365,1360 1300,1515", "0,1050 80,1110 20,1090",
  ],
};

const stateLines: Layer = {
  A: [
    "30,250 40,290 30,330 60,480 100,520 130,590 180,620 240,650 290,710 320,780 270,780 290,840 260,900 270,970 340,980 390,1000 375,930 370,860 440,860 465,820 440,770",
    "440,770 500,820 540,850 570,900 620,870 625,830 690,790 700,750 750,750 775,790 760,900 770,960 740,1070 760,1090 790,1040 830,1040 810,990 870,1010 940,1000 1000,965 1030,930 1070,920 1050,850 1050,650 1000,600 970,560 960,480",
    "860,15 870,180 900,250 910,330 840,335 770,370 765,470 720,520 730,560 800,570 850,560 860,600 910,620 950,570", "940,1000 970,1060 965,1160", "1010,1215 1020,1260 1110,1295 1140,1370 1080,1400 1060,1440 1120,1480 1180,1480 1160,1520",
  ],
  B: ["190,20 110,60 130,100 190,125 200,180 260,180 260,160 320,185 330,225 380,270 455,275 465,340 560,335 610,350 670,330 660,380 710,370 720,410 780,400", "1568,30 1510,80 1520,150 1550,180 1480,240 1490,290 1530,330 1560,410 1540,410 1500,320 1440,320 1380,310 1290,270 1260,290 1300,340 1380,360 1410,450 1400,490 1295,615", "1410,460 1480,490 1568,570"],
  C: ["0,590 80,650 80,690 150,735 180,740 165,715 190,715 210,750 240,725 330,730 390,765 410,730 380,680 375,620 405,555 480,510 440,485 445,470 500,460 480,400 520,340 570,370 670,365 760,410 830,425 930,390 940,330 990,260 1000,190 1020,160", "760,420 750,490 690,490 680,530 650,530 635,580 660,650 730,690 740,720 790,720 830,760 880,765 900,795 960,810 985,880 920,900 915,920 1000,920 1100,960 1190,965 1185,1030 1100,1055 1030,1050 1040,1085 1090,1100 1110,1150 1130,1170 1130,1225", "1541,1000 1480,960 1450,985 1400,990 1395,1030", "1395,1070 1300,1110 1240,1150 1150,1165 1160,1220", "1541,1225 1460,1210 1450,1260 1400,1270", "1110,1290 1150,1310 1150,1350 1180,1390 1160,1440 1200,1430 1200,1525", "80,20 70,50 30,50 0,25"],
  D: ["1190,0 1010,70 1010,120 1040,150 1050,90 1100,100 1180,40 1250,50 1320,80 1360,60 1370,30 1440,45 1410,90 1480,75 1568,130", "1390,125 1350,150 1350,190 1250,200 1250,240 1190,270 1080,350 1020,370 960,400 930,450 860,465 740,550 690,620", "600,680 550,730 530,780 550,900 590,980 670,1015 770,1030 890,1020 940,950 980,960 980,1040 1010,1080 990,1140 890,1145 730,1180 725,1240 765,1290 700,1310 720,1360 790,1370 830,1440 800,1515", "30,1400 110,1380 150,1350 200,1370 200,1440 240,1480 240,1515", "700,1500 740,1480 750,1515", "1568,860 1520,880 1520,940 1460,960 1470,1030 1530,1120 1480,1190 1390,1290 1420,1350 1440,1450 1430,1515"],
  E: ["0,130 50,140 120,130 170,170 230,190 250,250 310,340 310,400 250,470 225,530 250,560 210,640 170,720 120,760 155,840 80,855 0,865", "20,980 60,940 130,950 200,870 220,890 210,960 235,980 160,1020 150,1060 190,1110 240,1080 270,1120 310,1140 400,1130 390,1050 440,1010 420,1080 490,1050 450,1110 440,1180 490,1160 530,1110 600,1130 680,1145 690,1070 770,1010 850,975 890,955 915,990 920,1040 970,1100 930,1180 900,1180 940,1200 1000,1220 1030,1190 1060,1130 1080,1160 1150,1170 1120,1130 1180,1130 1200,1100 1180,1220 1170,1250 1240,1245 1300,1240 1340,1270 1370,1240 1410,1110 1470,1130 1510,1160 1530,1110 1568,1100", "20,1060 50,1150 70,1250 130,1300 120,1450 180,1430 220,1515"],
  F: ["0,1110 20,1160 90,1190 150,1210 160,1290 200,1310 300,1330 320,1410 400,1450 410,1390 460,1415 530,1395 590,1450 560,1515", "1205,0 1210,60 1250,90 1310,80 1310,150 1385,195 1380,230 1230,220 1210,270 1140,290 1140,330 1210,360 1270,380 1260,450 1190,460 1210,530 1270,600 1360,640 1440,690", "1490,730 1490,770 1440,800 1350,760 1340,800 1290,805 1270,775 1220,780 1210,830 1150,880 1100,940 1000,1020 890,1070 865,1100 855,1200 880,1320 940,1400 950,1490 1060,1500 1150,1480 1190,1420 1220,1470 1240,1515"],
};

const nationLines: Layer = {
  B: ["895,15 915,60 905,120 880,125 885,180 840,180 825,210 820,260 795,290", "790,365 830,375 860,400 890,410 920,460 950,490 990,485", "1015,535 1030,490 1060,480", "1120,520 1150,530 1170,560 1210,570 1280,610 1300,640 1375,655 1390,700 1425,760 1430,795 1470,770 1500,780 1515,820 1568,865"],
  C: ["895,20 910,70 945,100 960,130 1005,155 1040,105 1085,100 1095,65 1130,50 1180,55 1240,80 1245,105 1280,110 1265,150 1280,220 1305,235 1295,320 1380,345 1410,410 1490,420 1541,495", "0,865 50,885 150,970 180,925 230,925 260,960 300,970 420,1078 545,1050 560,1090 565,1187 655,1190 680,1215 780,1215 820,1250 830,1285 870,1280 890,1240 885,1200 990,1203 1110,1275 1120,1222 1200,1225 1240,1175 1310,1215 1325,1260 1490,1285 1520,1350 1500,1465 1541,1490"],
};

const route: [Sheet, string][] = [
  ["A", "905,487 935,485 945,500 1000,568 1010,568 1040,605 1050,600 1068,640 1080,690 1087,835 1097,850 1103,900 1120,935 1160,965 1165,1000 1165,1100 1177,1125 1177,1155 1193,1190 1193,1237 1222,1270 1225,1280 1255,1302 1320,1308 1335,1325 1363,1352 1362,1390 1425,1453 1435,1453 1450,1470 1540,1470"],
  ["B", "0,1485 65,1495 95,1515 145,1505"],
  ["E", "240,115 250,115 272,145 287,145 380,245 392,245 465,308 515,330 555,370 605,390 675,390 695,380 765,373 815,348 830,352 862,325 940,360 953,355 985,390 1005,450 1060,535 1145,625 1160,625 1215,680 1255,695 1310,740 1455,815 1490,850 1535,865 1550,845"],
  ["F", "15,845 65,872 95,870 105,855 140,850 165,865 190,905 250,928 262,950 280,990 305,990 325,1008 345,1008 355,1020 380,1020 445,1050 525,1055 573,1037 617,1050 693,1018"],
];

const routePath = route.map(([s, pts], i) => (i ? trace(s, pts).replace("M", "L") : trace(s, pts))).join("");

type Kind = "town" | "city" | "region" | "state" | "country" | "townHi" | "cityHi";
type Place = [Sheet, string, number, number, Kind?];

const places: Place[] = [
  ["A", "Haryana", 312, 93, "state"], ["A", "Panipat", 782, 81], ["A", "Baraut", 926, 167], ["A", "Bijnor", 1372, 106], ["A", "Rohtak", 580, 382],
  ["A", "Meerut", 1153, 338, "city"], ["A", "New Delhi", 900, 455, "city"], ["A", "Amroha", 1543, 381], ["A", "Bulandshahr", 1228, 601], ["A", "Gurugram", 810, 676, "city"],
  ["A", "Palwal", 960, 767], ["A", "Khurja", 1228, 803], ["A", "Narnaul", 338, 827], ["A", "Rewari", 598, 838, "city"], ["A", "unu", 64, 880], ["A", "Alwar", 596, 1123],
  ["A", "Aligarh", 1337, 1037, "city"], ["A", "Hathras", 1332, 1193], ["A", "Mathura", 1008, 1212], ["A", "Bharatpur", 1048, 1338], ["A", "Agra", 1308, 1355, "city"],
  ["A", "Jaipur", 190, 1515, "city"], ["A", "ani", 295, 406], ["A", "K", 92, 225], ["A", "Sambhal", 1596, 584], ["A", "Kasganj", 1633, 975],
  ["B", "Haldwani", 514, 99], ["B", "Rudrapur", 448, 252], ["B", "Moradabad", 305, 383], ["B", "Pilibhit", 656, 464], ["B", "Bareilly", 458, 629, "city"], ["B", "Budaun", 308, 832],
  ["B", "Etah", 70, 1126], ["B", "Mainpuri", 260, 1425], ["B", "Hardoi", 822, 1223], ["B", "Sitapur", 1103, 1218], ["B", "Lakhimpur", 1153, 982], ["B", "Barabanki", 1365, 1514],
  ["B", "Bahraich", 1567, 1117], ["B", "भिमदत्त", 845, 352, "townHi"], ["B", "धनगढी", 1043, 515, "townHi"], ["B", "सुदूरपश्चिम", 1220, 50, "region"], ["B", "प्रदेश", 1220, 128, "region"],
  ["C", "वीरेन्द्रनगर", 16, 485, "townHi"], ["C", "कर्णाली प्रदेश", 435, 88, "region"], ["C", "नेपाल", 738, 655, "country"], ["C", "गण्डकी प्रदेश", 1200, 665, "region"],
  ["C", "लुम्बिनी प्रदेश", 455, 843, "region"], ["C", "पोखरा", 1178, 842, "cityHi"], ["C", "बुटवल", 920, 1040, "townHi"], ["C", "भरतपुर", 1397, 1050, "townHi"], ["C", "गोरख", 1483, 958, "townHi"], ["C", "Gonda", 180, 1388],
  ["D", "Dhaulpur", 1250, 153], ["D", "Gangapur", 650, 220], ["D", "City", 652, 290], ["D", "Morena", 1295, 282], ["D", "Gwalior", 1383, 565, "city"], ["D", "Tonk", 174, 572],
  ["D", "Sawai Madhopur", 463, 663], ["D", "Bundi", 102, 919], ["D", "Kota", 212, 1073, "city"], ["D", "Baran", 547, 1127], ["D", "Shivpuri", 1127, 931], ["D", "Guna", 955, 1493],
  ["E", "Jhansi", 30, 1030, "city"], ["E", "Lalitpur", -50, 1370], ["E", "Bhind", 138, 236], ["E", "Kanpur", 917, 293, "city"], ["E", "Lucknow", 1232, 173, "city"], ["E", "Raebareli", 1390, 445],
  ["E", "Orai", 475, 683], ["E", "Fatehpur", 1168, 717], ["E", "Banda", 922, 900], ["E", "Satna", 1180, 1537], ["E", "Rewa", 1415, 1550],
  ["F", "Prayagraj", 116, 912, "city"], ["F", "Faizabad", 270, 105], ["F", "Basti", 555, 99], ["F", "Gorakhpur", 872, 110, "city"], ["F", "Bettiah", 1432, 182], ["F", "Deoria", 1077, 276],
  ["F", "Akbarpur", 463, 325], ["F", "Sultanpur", 235, 424], ["F", "Siwan", 1360, 448], ["F", "Azamgarh", 780, 541], ["F", "Mau", 972, 708], ["F", "Jaunpur", 535, 836], ["F", "Ballia", 1258, 729],
  ["F", "Chh", 1493, 713], ["F", "Ghazipur", 982, 830], ["F", "Buxar", 1170, 930], ["F", "Varanasi", 695, 978, "city"], ["F", "Arra", 1490, 935], ["F", "Pa", 1508, 1093],
  ["F", "Mirzapur", 480, 1190], ["F", "Sasaram", 1190, 1215], ["F", "Aurangabad", 1367, 1427], ["F", "M", 1551, 272],
];

const kinds: Record<Kind, { size: number; fill: string; italic?: boolean }> = {
  town: { size: 20, fill: "#4a4a4a" },
  city: { size: 24, fill: "#4a4a4a" },
  townHi: { size: 20, fill: "#3a3a3a" },
  cityHi: { size: 23, fill: "#3a3a3a" },
  state: { size: 22, fill: "#8d7399", italic: true },
  region: { size: 21, fill: "#866a94" },
  country: { size: 26, fill: "#775a87" },
};

const townDots: Layer = {
  A: ["923,192 576,318 353,384 1545,318 1226,631 1226,720 957,792 336,852 599,1146 1332,1128 1142,1188 1047,1362 1371,24 782,15"],
  B: ["515,126 448,276 128,360 655,486 28,516 308,858 62,996 73,1152 258,1356 822,1248 1103,1152 1153,912 845,276 1041,444"],
  C: ["16,510 920,1062 1395,1074 1492,882 179,1410 0,1140"],
  D: ["1249,180 655,312 1293,306 174,504 464,594 100,942 548,1152 1126,954 952,1421 1517,1392"],
  E: ["140,258 1366,36 1389,468 476,612 1170,648 924,924 1181,1464 1416,1488"],
  F: ["270,132 556,126 1433,114 1076,300 464,348 232,450 1356,474 784,564 973,642 540,756 1260,750 984,852 1168,864 1508,870 481,1122 1189,1242 1368,1356"],
};

const cityDots: Layer = {
  A: ["1153,258 806,588 599,756 1338,954 1310,1387"],
  B: ["458,660"],
  C: ["1179,750"],
  D: ["190,48 1382,480 212,1104"],
  E: ["34,936 917,322 1232,96"],
  F: ["119,948 871,144 697,1006"],
};

const dotList = (layer: Layer) =>
  (Object.keys(layer) as Sheet[]).flatMap((s) =>
    layer[s]!.flatMap((l) =>
      l.split(" ").map((p) => {
        const [x, y] = p.split(",").map(Number);
        return at(s, x, y);
      })
    )
  );

const Dots = ({ layer, r }: { layer: Layer; r: number }) => (
  <g fill="#fbfaf8" stroke="#7d7d78" strokeWidth={2}>
    {dotList(layer).map(([x, y], i) => (
      <circle key={i} cx={x} cy={y} r={r} />
    ))}
  </g>
);

const capital = at("A", 900, 497);
const startPin = at("A", 896, 343);
const endPin = at("F", 673, 902);

const RouteMap = () => (
  <MapSvg viewBox="0 0 1680 1000" preserveAspectRatio="xMidYMid slice" role="img" aria-label="Route from delhi to varanasi">
    <defs>
      <filter id="ragged" x="0" y="0" width="1680" height="1000" filterUnits="userSpaceOnUse">
        <feTurbulence type="fractalNoise" baseFrequency="0.06" numOctaves={3} seed={4} result="n" />
        <feDisplacementMap in="SourceGraphic" in2="n" scale={22} xChannelSelector="R" yChannelSelector="G" />
      </filter>
      <filter id="wavy" x="0" y="0" width="1680" height="1000" filterUnits="userSpaceOnUse">
        <feTurbulence type="fractalNoise" baseFrequency="0.09" numOctaves={2} seed={9} result="n" />
        <feDisplacementMap in="SourceGraphic" in2="n" scale={9} xChannelSelector="R" yChannelSelector="G" />
      </filter>
      <filter id="patchy" x="0" y="0" width="1680" height="1000" filterUnits="userSpaceOnUse">
        <feTurbulence type="fractalNoise" baseFrequency="0.07" numOctaves={4} seed={21} result="n" />
        <feColorMatrix in="n" type="matrix" values="0 0 0 0 0  0 0 0 0 0  0 0 0 0 0  0 0 0 9 -4.5" result="m" />
        <feDisplacementMap in="SourceGraphic" in2="n" scale={40} xChannelSelector="G" yChannelSelector="B" result="d" />
        <feComposite in="d" in2="m" operator="in" />
      </filter>
      <filter id="dense" x="0" y="0" width="1680" height="1000" filterUnits="userSpaceOnUse">
        <feTurbulence type="fractalNoise" baseFrequency="0.05" numOctaves={4} seed={13} result="n" />
        <feColorMatrix in="n" type="matrix" values="0 0 0 0 0  0 0 0 0 0  0 0 0 0 0  0 0 0 9 -3.6" result="m" />
        <feDisplacementMap in="SourceGraphic" in2="n" scale={30} xChannelSelector="G" yChannelSelector="B" result="d" />
        <feComposite in="d" in2="m" operator="in" />
      </filter>
      <filter id="grainy" x="0" y="0" width="1680" height="1000" filterUnits="userSpaceOnUse">
        <feTurbulence type="fractalNoise" baseFrequency="0.22" numOctaves={2} seed={6} result="n" />
        <feColorMatrix in="n" type="matrix" values="0 0 0 0 0  0 0 0 0 0  0 0 0 0 0  0 0 0 8 -3" result="m" />
        <feDisplacementMap in="SourceGraphic" in2="n" scale={14} xChannelSelector="G" yChannelSelector="B" result="d" />
        <feComposite in="d" in2="m" operator="in" />
      </filter>
    </defs>
    <rect width="1680" height="1000" fill="#f1eee9" />
    <path d={merge(meadow, true)} fill="#f2f2de" filter="url(#ragged)" />
    <path d={merge(woodland, true)} fill="#cddeb9" filter="url(#patchy)" />
    <path d={merge(denseWood, true)} fill="#c7dab4" filter="url(#dense)" />
    <path d={merge(scrub, true)} fill="#d7dfbd" filter="url(#ragged)" />
    <path d={merge(forest, true)} fill="#c5d9b2" stroke="#c5d9b2" strokeWidth={3} filter="url(#ragged)" />
    <path d={merge(glaciers, true)} fill="#b4d3f6" filter="url(#grainy)" />
    <g filter="url(#wavy)" fill="none" strokeLinejoin="round">
      <path d={merge(lakes, true)} fill="#b0d1df" />
      <path d={merge(streams)} stroke="#cfe1e6" strokeWidth={2} />
      <path d={merge(rivers)} stroke="#b3d4e0" strokeWidth={4} />
      <path d={merge(stateLines)} stroke="#bdb0c6" strokeWidth={3} />
      <path d={merge(nationLines)} stroke="#a999ae" strokeWidth={6} />
    </g>
    <g fill="none" strokeLinejoin="round" strokeLinecap="round">
      <path d={merge(trunks)} stroke="#ebb29f" strokeWidth={2} />
      <path d={merge(motorways)} stroke="#da8ea5" strokeWidth={3} />
    </g>
    <Dots layer={townDots} r={4} />
    <Dots layer={cityDots} r={5} />
    <circle cx={capital[0]} cy={capital[1]} r={7} fill="#f1eee9" stroke="#6f6f6b" strokeWidth={2} />
    <circle cx={capital[0]} cy={capital[1]} r={3} fill="#6f6f6b" />
    <g fontFamily={`"Noto Sans", "Noto Sans Devanagari", sans-serif`} textAnchor="middle" stroke="rgba(248,246,242,0.8)" strokeWidth={4} strokeLinejoin="round" paintOrder="stroke">
      {places.map(([s, name, px, py, kind = "town"]) => {
        const [x, y] = at(s, px, py);
        const k = kinds[kind];
        return (
          <text key={name + px} x={x} y={y} fontSize={k.size} fill={k.fill} fontStyle={k.italic ? "italic" : "normal"}>
            {name}
          </text>
        );
      })}
    </g>
    <path d={routePath} fill="none" stroke="#0000ff" strokeOpacity={0.8} strokeWidth={10} strokeLinecap="round" strokeLinejoin="round" />
    <g transform={`translate(${startPin[0]} ${startPin[1]})`}>
      <path fillRule="evenodd" fill="#4f7f35" d="M0 0C7 0 12 5 12 12C12 19 5 24 0 32C-5 24 -12 19 -12 12C-12 5 -7 0 0 0ZM0 7A5 5 0 1 0 0 17A5 5 0 1 0 0 7Z" />
      <circle cx={0} cy={12} r={5} fill="#d9d2dc" />
    </g>
    <g transform={`translate(${endPin[0]} ${endPin[1]})`}>
      <path d="M-2 11H2V20L0 23L-2 20Z" fill="#b02a2a" />
      <circle r={9} fill="#b02a2a" />
      <path d="M-5 0A5 5 0 0 1 0 -5" fill="none" stroke="#f0c9c9" strokeWidth={1} />
    </g>
  </MapSvg>
);

export default function App() {
  return (
    <Page>
      <GlobalStyle />
      <Container>
        <Header>
          <Title>ECOयात्रा</Title>
          <Subtitle>Eco-friendly Route Planning System</Subtitle>
        </Header>
        <Planner>
          <Card>
            <Form onSubmit={(e) => e.preventDefault()}>
              <Field>
                <Label htmlFor="start">Start Location:</Label>
                <TextInput id="start" type="text" defaultValue="delhi" />
              </Field>
              <Field>
                <Label htmlFor="destination">Destination:</Label>
                <TextInput id="destination" type="text" defaultValue="varanasi" />
              </Field>
              <Field $gap={20}>
                <Label htmlFor="vehicle">Vehicle Type:</Label>
                <SelectWrap>
                  <Select id="vehicle" defaultValue="bus">
                    <option value="bus">Bus</option>
                  </Select>
                  <SelectArrows viewBox="0 0 10 20" aria-hidden="true">
                    <path d="M5 0L10 8H0ZM0 12H10L5 20Z" />
                  </SelectArrows>
                </SelectWrap>
              </Field>
              <Actions>
                <Button type="submit">Calculate Route</Button>
                <Button type="button">Monitor Conditions</Button>
              </Actions>
            </Form>
          </Card>
          <MapCard>
            <RouteMap />
            <ZoomControl>
              <ZoomButton type="button" aria-label="Zoom in">+</ZoomButton>
              <ZoomButton type="button" aria-label="Zoom out">−</ZoomButton>
            </ZoomControl>
            <Attribution>
              <AttributionLink href="#leaflet">Leaflet</AttributionLink>
            </Attribution>
          </MapCard>
        </Planner>
        <InfoGrid>
          <Card>
            <InfoTitle>Route Information</InfoTitle>
            <div>Distance: 800.67 km</div>
            <div>Duration: 9.98 hours</div>
            <div>Emissions: 711.72 kg CO2 kg CO2</div>
          </Card>
          <Card>
            <InfoTitle>Current Conditions</InfoTitle>
            <div>Traffic: Current Speed: 80.21 km/h (Free Flow: 77.08 km/h) - -4% congestion</div>
            <div>Air Quality: Start: AQI 172 (PM2.5: 172, PM10: 95), End: AQI 52 (PM2.5: 52, PM10: 51)</div>
            <div>Weather: Start: fog (11.05°C), End: fog (14.05°C)</div>
          </Card>
        </InfoGrid>
      </Container>
    </Page>
  );
}
